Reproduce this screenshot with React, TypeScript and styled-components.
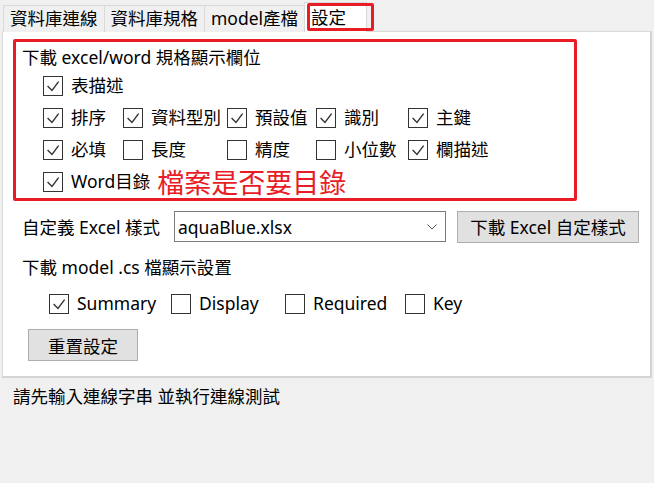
import React from "react";
import styled, { createGlobalStyle } from "styled-components";

const Global = createGlobalStyle`
  html, body { margin: 0; padding: 0; background: #f0f0f0; }
  body {
    font-family: "Noto Sans", "Noto Sans CJK TC", sans-serif;
    font-size: 17.5px;
    color: #000;
  }
`;

const Window = styled.div`
  width: 654px;
  height: 483px;
  display: flex;
  flex-direction: column;
  background: #f0f0f0;
  overflow: hidden;
`;

const TabStrip = styled.div`
  height: 32px;
  display: flex;
  align-items: flex-end;
  padding-left: 3px;
`;

const Tab = styled.div<{ $active?: boolean }>`
  position: relative;
  box-sizing: border-box;
  height: ${(p) => (p.$active ? 30 : 27)}px;
  display: flex;
  align-items: center;
  padding: ${(p) => (p.$active ? "0 20px 0 6px" : "0 6px")};
  margin-right: -1px;
  background: ${(p) => (p.$active ? "#fff" : "#f0f0f0")};
  border: 1px solid #d9d9d9;
  border-bottom: none;
  line-height: 1;
  white-space: nowrap;
  z-index: ${(p) => (p.$active ? 2 : 1)};
`;

const Highlight = styled.span`
  position: absolute;
  left: 2px;
  top: 0px;
  width: 67px;
  height: 28px;
  box-sizing: border-box;
  border: 3px solid #e81c24;
  border-radius: 2px;
`;

const Panel = styled.div`
  margin: -1px 2px 0;
  height: 347px;
  box-sizing: border-box;
  background: #fff;
  border: 1px solid #d9d9d9;
  border-right: 2px solid #d4d4d4;
  border-bottom: 2px solid #d4d4d4;
  display: flex;
  flex-direction: column;
  align-items: flex-start;
`;

const RedGroup = styled.div`
  margin: 7px 0 0 10px;
  width: 564px;
  height: 162px;
  box-sizing: border-box;
  border: 3px solid #e81c24;
  border-radius: 2px;
  display: flex;
  flex-direction: column;
`;

const Heading = styled.div`
  height: 28px;
  display: flex;
  align-items: center;
  padding-left: 6px;
  white-space: nowrap;
`;

const CheckRow = styled.div`
  height: 32px;
  display: flex;
  align-items: center;
  padding-left: 27px;
`;

const CheckGrid = styled.div<{ $cols: string }>`
  height: 32px;
  display: grid;
  grid-template-columns: ${(p) => p.$cols};
  align-items: center;
  padding-left: 27px;
`;

const Item = styled.label`
  display: flex;
  align-items: center;
  gap: 8px;
  white-space: nowrap;
  line-height: 1;
`;

const Box = styled.span`
  width: 20px;
  height: 20px;
  box-sizing: border-box;
  border: 1px solid #333;
  background: #fff;
  display: flex;
  flex: none;
`;

const Note = styled.span`
  margin-left: 7px;
  font-size: 27px;
  color: #e81c24;
  line-height: 1;
  white-space: nowrap;
`;

const StyleRow = styled.div`
  margin-top: 10px;
  height: 31px;
  display: flex;
  align-items: center;
  padding-left: 19px;
`;

const FieldLabel = styled.span`
  width: 152px;
  white-space: nowrap;
`;

const Combo = styled.div`
  width: 272px;
  height: 31px;
  box-sizing: border-box;
  border: 1px solid #7a7a7a;
  background: #fff;
  display: flex;
  align-items: center;
  justify-content: space-between;
  padding: 0 8px 0 3px;
`;

const Button = styled.div<{ $w: number }>`
  width: ${(p) => p.$w}px;
  height: 32px;
  box-sizing: border-box;
  border: 1px solid #adadad;
  background: #e1e1e1;
  display: flex;
  align-items: center;
  justify-content: center;
  white-space: nowrap;
`;

const StyleButton = styled(Button)`
  margin-left: 11px;
`;

const ResetButton = styled(Button)`
  margin: 10px 0 0 25px;
`;

const SubHeading = styled.div`
  margin-top: 9px;
  height: 30px;
  display: flex;
  align-items: center;
  padding-left: 19px;
  white-space: nowrap;
`;

const ModelGrid = styled.div`
  margin-top: 8px;
  height: 30px;
  display: grid;
  grid-template-columns: 122px 114px 120px auto;
  align-items: center;
  padding-left: 46px;
`;

const Status = styled.div`
  height: 35px;
  display: flex;
  align-items: center;
  padding-left: 13px;
  white-space: nowrap;
`;

const Check = ({ checked, label }: { checked?: boolean; label: string }) => (
  <Item>
    <Box>
      {checked && (
        <svg width="18" height="18" viewBox="0 0 18 18">
          <polyline
            points="3.6,9 8,13.4 14.6,4.6"
            fill="none"
            stroke="#333"
            strokeWidth="1.4"
          />
        </svg>
      )}
    </Box>
    {label}
  </Item>
);

const cols = "80px 104px 89px 92px auto";

export default function App() {
  return (
    <Window>
      <Global />
      <TabStrip>
        <Tab>資料庫連線</Tab>
        <Tab>資料庫規格</Tab>
        <Tab>model產檔</Tab>
        <Tab $active>
          設定
          <Highlight />
        </Tab>
      </TabStrip>
      <Panel>
        <RedGroup>
          <Heading>下載 excel/word 規格顯示欄位</Heading>
          <CheckRow>
            <Check checked label="表描述" />
          </CheckRow>
          <CheckGrid $cols={cols}>
            <Check checked label="排序" />
            <Check checked label="資料型別" />
            <Check checked label="預設值" />
            <Check checked label="識別" />
            <Check checked label="主鍵" />
          </CheckGrid>
          <CheckGrid $cols={cols}>
            <Check checked label="必填" />
            <Check label="長度" />
            <Check label="精度" />
            <Check label="小位數" />
            <Check checked label="欄描述" />
          </CheckGrid>
          <CheckRow>
            <Check checked label="Word目錄" />
            <Note>檔案是否要目錄</Note>
          </CheckRow>
        </RedGroup>
        <StyleRow>
          <FieldLabel>自定義 Excel 樣式</FieldLabel>
          <Combo>
            <span>aquaBlue.xlsx</span>
            <svg width="10" height="6" viewBox="0 0 10 6">
              <polyline points="0.5,0.5 5,5 9.5,0.5" fill="none" stroke="#555" strokeWidth="1" />
            </svg>
          </Combo>
          <StyleButton $w={182}>下載 Excel 自定樣式</StyleButton>
        </StyleRow>
        <SubHeading>下載 model .cs 檔顯示設置</SubHeading>
        <ModelGrid>
          <Check checked label="Summary" />
          <Check label="Display" />
          <Check label="Required" />
          <Check label="Key" />
        </ModelGrid>
        <ResetButton $w={110}>重置設定</ResetButton>
      </Panel>
      <Status>請先輸入連線字串 並執行連線測試</Status>
    </Window>
  );
}
